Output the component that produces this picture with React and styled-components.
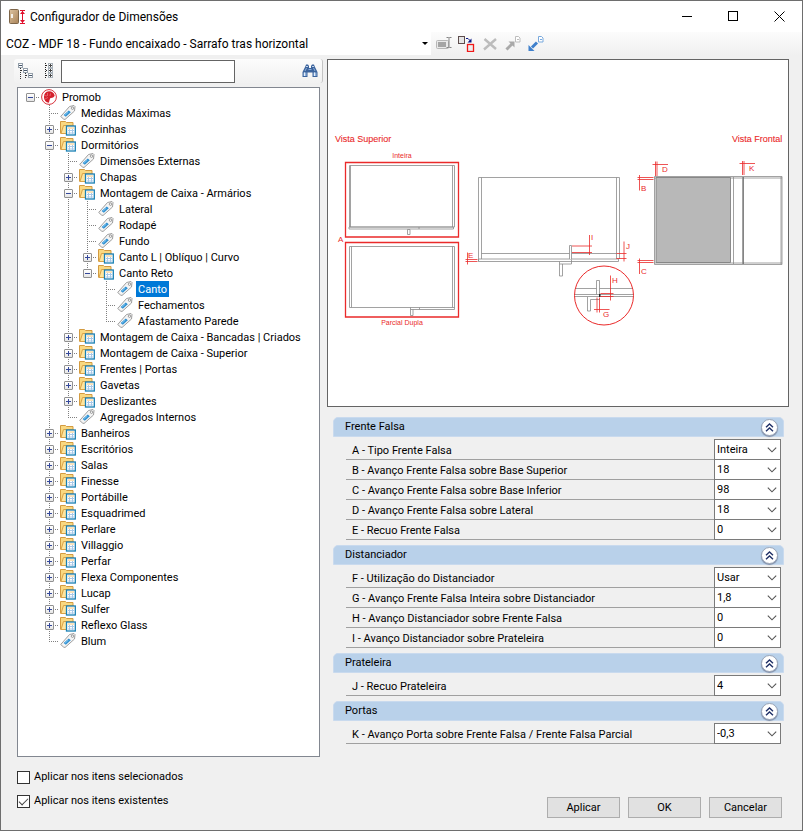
import React from 'react'
import styled, { createGlobalStyle, css } from 'styled-components'

const TREE = {
  name: 'Promob',
  icon: 'brand',
  children: [
    { name: 'Medidas Máximas', icon: 'tag' },
    { name: 'Cozinhas' },
    {
      name: 'Dormitórios',
      children: [
        { name: 'Dimensões Externas', icon: 'tag' },
        { name: 'Chapas' },
        {
          name: 'Montagem de Caixa - Armários',
          children: [
            { name: 'Lateral', icon: 'tag' },
            { name: 'Rodapé', icon: 'tag' },
            { name: 'Fundo', icon: 'tag' },
            { name: 'Canto L | Oblíquo | Curvo' },
            {
              name: 'Canto Reto',
              children: [
                { name: 'Canto', icon: 'tag' },
                { name: 'Fechamentos', icon: 'tag' },
                { name: 'Afastamento Parede', icon: 'tag' },
              ],
            },
          ],
        },
        { name: 'Montagem de Caixa - Bancadas | Criados' },
        { name: 'Montagem de Caixa - Superior' },
        { name: 'Frentes | Portas' },
        { name: 'Gavetas' },
        { name: 'Deslizantes' },
        { name: 'Agregados Internos', icon: 'tag' },
      ],
    },
    { name: 'Banheiros' },
    { name: 'Escritórios' },
    { name: 'Salas' },
    { name: 'Finesse' },
    { name: 'Portábille' },
    { name: 'Esquadrimed' },
    { name: 'Perlare' },
    { name: 'Villaggio' },
    { name: 'Perfar' },
    { name: 'Flexa Componentes' },
    { name: 'Lucap' },
    { name: 'Sulfer' },
    { name: 'Reflexo Glass' },
    { name: 'Blum', icon: 'tag' },
  ],
}

const SECTIONS = [
  {
    title: 'Frente Falsa',
    fields: [
      ['A - Tipo Frente Falsa', 'Inteira'],
      ['B - Avanço Frente Falsa sobre Base Superior', '18'],
      ['C - Avanço Frente Falsa sobre Base Inferior', '98'],
      ['D - Avanço Frente Falsa sobre Lateral', '18'],
      ['E - Recuo Frente Falsa', '0'],
    ],
  },
  {
    title: 'Distanciador',
    fields: [
      ['F - Utilização do Distanciador', 'Usar'],
      ['G - Avanço Frente Falsa Inteira sobre Distanciador', '1,8'],
      ['H - Avanço Distanciador sobre Frente Falsa', '0'],
      ['I - Avanço Distanciador sobre Prateleira', '0'],
    ],
  },
  { title: 'Prateleira', fields: [['J - Recuo Prateleira', '4']] },
  {
    title: 'Portas',
    fields: [['K - Avanço Porta sobre Frente Falsa / Frente Falsa Parcial', '-0,3']],
  },
]

const PROFILE = 'COZ - MDF 18 - Fundo encaixado - Sarrafo tras horizontal'

/* icons */

const AppIcon = () => (
  <svg width="17" height="16" viewBox="0 0 17 16" aria-hidden="true">
    <defs>
      <linearGradient id="door" x1="0" y1="0" x2="1" y2="1">
        <stop offset="0" stopColor="#dcc3a0" />
        <stop offset="1" stopColor="#a98358" />
      </linearGradient>
    </defs>
    <rect x=".5" y=".5" width="9" height="14" rx="1" fill="url(#door)" stroke="#7d6548" />
    <rect x="2" y="5" width="2" height="4" fill="#f4f1ea" />
    <path d="M11 1.500h5M11 14.500h5M13.500 2v12" stroke="#e0102c" />
    <path d="M13.500 2l2.500 3h-5zM13.500 14l2.500-3h-5z" fill="#e0102c" />
  </svg>
)

const BrandIcon = () => (
  <svg width="16" height="16" viewBox="0 0 16 16" aria-hidden="true">
    <circle cx="8" cy="8" r="7.4" fill="#fff" stroke="#d8323c" />
    <path
      d="M8 2.200a5.800 5.800 0 0 1 5.700 4.600c-1 1.700-2.500 2.400-4.200 2.200-1 1-1 2.800-1.500 4.700A5.800 5.800 0 0 1 8 2.200z"
      fill="#d41f2c"
    />
    <path d="M3.500 6.500l2.500.5M6.500 4v3M9.500 4.500L9 7M4 10l3-1.500" stroke="#ee8d93" strokeWidth=".6" />
  </svg>
)

const FolderIcon = () => (
  <svg width="16" height="16" viewBox="0 0 16 16" aria-hidden="true">
    <path d="M.5 12.500V.5h5l1 1H13v4" fill="#f9d880" stroke="#d39b41" />
    <path d="M1 12.500l2.500-8h10v8z" fill="#ffe59d" stroke="#d9a348" />
    <rect x="6.500" y="5" width="8.800" height="9" fill="#fff" stroke="#1a80b4" strokeWidth="1.300" />
    <path d="M8 7h6" stroke="#f6c678" />
    <path d="M8 9.500h6M8 12h6M9.500 8v5M12.500 8v5" stroke="#a9c9e8" />
  </svg>
)

const TagIcon = () => (
  <svg width="16" height="16" viewBox="0 0 16 16" aria-hidden="true">
    <path
      d="M9.500 1.500L14 .5l1 1-.5 4.500-9.500 8.500-1.500-.5-2.800-2.500z"
      fill="#f4f4f4"
      stroke="#949494"
      strokeWidth=".9"
    />
    <circle cx="12.500" cy="3.200" r="1.200" fill="#fff" stroke="#808080" strokeWidth=".8" />
    <path d="M8.800 5.500l2 1.800-5 4.500-2.200-1.700z" fill="#2d8fd0" />
    <path d="M7.800 6.800l.8.7-3.400 3.100-.9-.7z" fill="#6fbaea" />
  </svg>
)

const ICONS = { brand: BrandIcon, tag: TagIcon, folder: FolderIcon }

const CollapseTreeIcon = () => (
  <svg width="16" height="16" viewBox="0 0 16 16" shapeRendering="crispEdges" aria-hidden="true">
    <path d="M2.500 5v11M7.500 10v6" stroke="#333" strokeDasharray="1 1" />
    <path d="M3 7.500h3M8 12.500h3" stroke="#333" strokeDasharray="1 1" />
    <g fill="#fff" stroke="#95a0ab">
      <rect x=".5" y=".5" width="4" height="4" />
      <rect x="5.500" y="5.500" width="4" height="4" />
      <rect x="10.500" y="10.500" width="4" height="4" />
    </g>
    <path d="M1 2.500h3M6 7.500h3M11 12.500h3" stroke="#46566a" />
  </svg>
)

const ExpandTreeIcon = () => (
  <svg width="10" height="16" viewBox="0 0 10 16" shapeRendering="crispEdges" aria-hidden="true">
    <path d="M1.500 0v16" stroke="#222" strokeDasharray="1 1" />
    <path d="M2 2.500h2M2 7.500h2M2 12.500h2" stroke="#222" strokeDasharray="1 1" />
    <g fill="#fff" stroke="#a9b2ba">
      <rect x="4.500" y=".5" width="4" height="4" />
      <rect x="4.500" y="5.500" width="4" height="4" />
      <rect x="4.500" y="10.500" width="4" height="4" />
    </g>
    <path d="M5 2.500h3M5 7.500h3M5 12.500h3M6.500 1v3M6.500 6v3M6.500 11v3" stroke="#444" />
  </svg>
)

const BinocularsIcon = () => (
  <svg width="16" height="16" viewBox="0 0 16 16" aria-hidden="true">
    <path
      d="M3.500 3l.5-1.500h2L7 3v2h2V3l1-1.500h2l.5 1.500 3 6v5h-5v-4.500h-5V14h-5V9z"
      fill="#3c649d"
    />
    <path d="M4 3.500h2M10 3.500h2" stroke="#c3d5ec" />
    <path d="M1.500 9.500h3v3.500h-3zM11.500 9.500h3v3.500h-3z" fill="#8fb1dc" />
    <path d="M2.500 9.500v3.500M12.500 9.500v3.500" stroke="#e4eefa" />
    <path d="M4.500 5l-1.500 3M11.500 5l1.500 3M6.500 6.500h3" stroke="#8aacd8" />
  </svg>
)

const RenameIcon = () => (
  <svg width="16" height="16" viewBox="0 0 16 16" aria-hidden="true">
    <rect x=".5" y="4.500" width="12" height="8" rx="1" fill="#e9e9e9" stroke="#b7b7b7" />
    <rect x="2" y="6" width="8" height="5" fill="#a5a5a5" />
    <path d="M10.500 1.500h2l.5.5.5-.5h2M13 2v9M10.500 11.500h2l.5-.5.5.5h2" fill="none" stroke="#858585" />
  </svg>
)

const ReplaceIcon = () => (
  <svg width="17" height="16" viewBox="0 0 17 16" aria-hidden="true">
    <rect x=".5" y=".5" width="6" height="7" fill="#e6e6e6" stroke="#5d4c4c" />
    <path d="M8 2.500h2l2.500 2.500" fill="none" stroke="#0b1785" />
    <path d="M13.500 2.500v4h-4z" fill="#0b1785" />
    <rect x="9.500" y="8.500" width="6" height="7" fill="#eee" stroke="#f01818" strokeWidth="1.300" />
  </svg>
)

const DeleteIcon = () => (
  <svg width="14" height="14" viewBox="0 0 14 14" aria-hidden="true">
    <path d="M1.500 2l11.500 10M13 2L1 12.500" stroke="#bcbcbc" strokeWidth="2.400" />
  </svg>
)

const TransferIcon = ({ color, page, out }) => (
  <svg width="16" height="16" viewBox="0 0 16 16" aria-hidden="true">
    <path d="M10.500.5h3l1.500 1.500v4h-4.500z" fill="#fff" stroke={page} />
    <path d="M12 3.500h2" stroke={page} />
    <path d={out ? 'M.5 15V9L6.500 15z' : 'M9.500 5.500v6l-6-6z'} fill={color} />
    <path d={out ? 'M9 6.500L4 11.500' : 'M7.500 7.500L1.500 13.500'} stroke={color} strokeWidth="3" />
  </svg>
)

const ChevronIcon = () => (
  <svg width="10" height="6" viewBox="0 0 10 6" aria-hidden="true">
    <path d="M.8.6L5 4.800 9.200.6" fill="none" stroke="#555" strokeWidth="1.100" />
  </svg>
)

const DoubleUpIcon = () => (
  <svg width="9" height="9" viewBox="0 0 9 9" aria-hidden="true">
    <path d="M1 4.200L4.500 1 8 4.200M1 8.200L4.500 5 8 8.200" fill="none" stroke="#1f2f66" strokeWidth="1.400" />
  </svg>
)

const Diagram = () => (
  <Drawing viewBox="0 0 460 346" role="img" aria-label="Vista superior e frontal">
    <g fill="none" stroke="#8a8a8a" strokeWidth=".8">
      <path d="M21.500 105.500h105v61.500h-105zM22.500 105.500V167M124.500 105.500V167M21 167h104.500v2H21z" />
      <path d="M79.500 169.500h2.500v5h-2.500zM91 167v2" />
      <path d="M21.500 186.500h105v63H82.500M21.500 186.500v61h105M23.500 186.500v61M124.500 186.500v61" />
      <path d="M82.500 247.500v8h2.500v-6M91.500 247.500v2" />
      <path d="M150.500 201.500v-84h141v81.500M153.500 117.500V199M288.500 117.500V199M153.500 193.500h135" />
      <path d="M150.500 199h140v2.500h-140zM231.500 201.500v14.500h3V204M231.500 204h12v-4.500" />
      <path d="M241.500 199v-13.500h2V199" fill="#fff" />
      <path d="M247 228.500h21.500M271.500 228.500h33M246.500 234.500h59M246.500 236.500h59" />
      <path d="M268.500 234.500v-14h3v14M259.500 237v14h3v-11.500h9" />
      <path d="M326.500 116.500h127.500v88h-127.500zM326.500 118h127.500M326.500 203h127.500M405.500 117v87M414.500 117v87M453 117v87" />
      <path d="M328 117.500h74.500v85H328z" fill="#b8b8b8" stroke="#777" />
      <path d="M415.500 117v87" stroke="#666" />
    </g>
    <path d="M271 234h1.500v3H271z" fill="#222" />
    <g fill="none" stroke="#ea2a2a">
      <path d="M17.500 102.500h113v74.500h-113zM17.500 182.500h113v74.500h-113z" strokeWidth="1.300" />
      <circle cx="276" cy="235.500" r="29.500" />
      <g strokeWidth=".8">
        <path d="M139.500 192.500v12M137.500 199.500h12M137.500 201.500h12" />
        <path d="M261.500 175v20M244 186h20M244 192.500h20" />
        <path d="M296 181.500v20M288.500 193.500h10M288.500 198.500h10" />
        <path d="M282.500 215.500v25M272.500 233.500h13M272.500 236.500h13" />
        <path d="M269 237.500v15M271.500 237.500v15M266 249.500h15.500" />
        <path d="M327.500 101.500V116M329 101.500V116M324.500 104.500H340" />
        <path d="M414.500 101v14M416 101v14M411.500 103.500H427" />
        <path d="M311.500 115v15.500M309.500 117.500h16M309.500 119.500h16" />
        <path d="M311.500 198.500V214M309.500 200.500h16M309.500 202.500h16" />
      </g>
    </g>
    <g fill="#ea2a2a" fontFamily="Liberation Sans, Arial, sans-serif" fontSize="8">
      <g fontSize="9" stroke="#ea2a2a" strokeWidth=".1">
        <text x="7" y="82">Vista Superior</text>
        <text x="404" y="82">Vista Frontal</text>
      </g>
      <g fontSize="7" textAnchor="middle">
        <text x="74" y="98">Inteira</text>
        <text x="74" y="265">Parcial Dupla</text>
      </g>
      <text x="10" y="182">A</text>
      <text x="313" y="131">B</text>
      <text x="313" y="214">C</text>
      <text x="334" y="112">D</text>
      <text x="140" y="198">E</text>
      <text x="275" y="257">G</text>
      <text x="284" y="223">H</text>
      <text x="263" y="180">I</text>
      <text x="298" y="189">J</text>
      <text x="421" y="111">K</text>
    </g>
  </Drawing>
)

/* tree */

const hasToggle = node => node.icon !== 'tag'

class TreeNode extends React.Component {
  state = { open: Boolean(this.props.node.children) }

  handleToggle = () => {
    this.setState(({ open }) => ({ open: !open }))
  }

  render() {
    const { node, guides, root, last, selected, onSelect } = this.props
    const { open } = this.state
    const Icon = ICONS[node.icon || 'folder']
    const children = node.children || []
    return (
      <li>
        <TreeRow>
          {guides.map((line, i) => (
            <Guide key={i} $full={line} />
          ))}
          <Guide $branch $full={!root && !last} $half={!root && last}>
            {hasToggle(node) && (
              <Toggle
                type="button"
                aria-label={`${open ? 'Recolher' : 'Expandir'} ${node.name}`}
                onClick={this.handleToggle}
              >
                <svg width="7" height="7" shapeRendering="crispEdges" aria-hidden="true">
                  <path d={open ? 'M1 3.500h5' : 'M1 3.500h5M3.500 1v5'} stroke="#34489a" />
                </svg>
              </Toggle>
            )}
          </Guide>
          <NodeIcon>
            <Icon />
          </NodeIcon>
          <NodeLabel
            type="button"
            $selected={selected === node.name}
            onClick={() => onSelect(node.name)}
          >
            {node.name}
          </NodeLabel>
        </TreeRow>
        {open && children.length > 0 && (
          <TreeList>
            {children.map((child, i) => (
              <TreeNode
                key={child.name}
                node={child}
                guides={[...guides, !root && !last]}
                last={i === children.length - 1}
                selected={selected}
                onSelect={onSelect}
              />
            ))}
          </TreeList>
        )}
      </li>
    )
  }
}

/* properties */

class Section extends React.Component {
  state = { open: true }

  handleToggle = () => {
    this.setState(({ open }) => ({ open: !open }))
  }

  render() {
    const { title, fields } = this.props
    return (
      <section>
        <SectionHeader>
          <SectionTitle>{title}</SectionTitle>
          <RoundButton
            type="button"
            aria-label={`Recolher ${title}`}
            onClick={this.handleToggle}
          >
            <DoubleUpIcon />
          </RoundButton>
        </SectionHeader>
        {this.state.open && (
          <Fields>
            {fields.map(([label, value]) => {
              const id = `field-${label[0]}`
              return (
                <Field key={id}>
                  <FieldLabel htmlFor={id}>{label}</FieldLabel>
                  <SelectBox>
                    <FieldSelect id={id} defaultValue={value}>
                      <option>{value}</option>
                    </FieldSelect>
                    <ChevronIcon />
                  </SelectBox>
                </Field>
              )
            })}
          </Fields>
        )}
      </section>
    )
  }
}

class App extends React.Component {
  state = { selected: 'Canto' }

  handleSelect = selected => {
    this.setState({ selected })
  }

  render() {
    return (
      <Window>
        <GlobalStyle />
        <TitleBar>
          <AppIcon />
          <Title>Configurador de Dimensões</Title>
          <WindowButton type="button" aria-label="Minimizar">
            <svg width="11" height="11"><path d="M0 5.500h10" stroke="#000" /></svg>
          </WindowButton>
          <WindowButton type="button" aria-label="Maximizar">
            <svg width="11" height="11">
              <rect x=".5" y=".5" width="9" height="9" fill="none" stroke="#000" />
            </svg>
          </WindowButton>
          <WindowButton type="button" aria-label="Fechar">
            <svg width="11" height="11">
              <path d="M.5.5l10 10M10.500.5l-10 10" stroke="#000" />
            </svg>
          </WindowButton>
        </TitleBar>

        <MainToolbar>
          <ProfileBox>
            <ProfileSelect aria-label="Configuração" defaultValue={PROFILE}>
              <option>{PROFILE}</option>
            </ProfileSelect>
            <svg width="6" height="3" aria-hidden="true">
              <path d="M0 0h6L3 3z" fill="#000" />
            </svg>
          </ProfileBox>
          <ToolButtons>
            <ToolButton type="button" aria-label="Renomear"><RenameIcon /></ToolButton>
            <ToolButton type="button" aria-label="Substituir"><ReplaceIcon /></ToolButton>
            <ToolButton type="button" aria-label="Excluir"><DeleteIcon /></ToolButton>
            <ToolButton type="button" aria-label="Exportar">
              <TransferIcon color="#a9a9a9" page="#bdbdbd" />
            </ToolButton>
            <ToolButton type="button" aria-label="Importar">
              <TransferIcon color="#3f80cc" page="#79a9dd" out />
            </ToolButton>
          </ToolButtons>
        </MainToolbar>

        <Content>
          <Column>
            <SearchBar>
              <ToolButton type="button" aria-label="Recolher tudo"><CollapseTreeIcon /></ToolButton>
              <ToolButton type="button" aria-label="Expandir tudo"><ExpandTreeIcon /></ToolButton>
              <SearchInput type="text" aria-label="Pesquisar" />
              <FindButton type="button" aria-label="Localizar"><BinocularsIcon /></FindButton>
            </SearchBar>
            <TreePanel>
              <TreeList>
                <TreeNode
                  root
                  node={TREE}
                  guides={[]}
                  selected={this.state.selected}
                  onSelect={this.handleSelect}
                />
              </TreeList>
            </TreePanel>
          </Column>
          <Column>
            <DrawingPanel>
              <Diagram />
            </DrawingPanel>
            <Sections>
              {SECTIONS.map(section => (
                <Section key={section.title} {...section} />
              ))}
            </Sections>
          </Column>
        </Content>

        <Footer>
          <Options>
            <Option>
              <Checkbox type="checkbox" />
              Aplicar nos itens selecionados
            </Option>
            <Option>
              <Checkbox type="checkbox" defaultChecked />
              Aplicar nos itens existentes
            </Option>
          </Options>
          <Actions>
            <ActionButton type="button">Aplicar</ActionButton>
            <ActionButton type="button">OK</ActionButton>
            <ActionButton type="button">Cancelar</ActionButton>
          </Actions>
        </Footer>
      </Window>
    )
  }
}

const GlobalStyle = createGlobalStyle`
  *, *::before, *::after {
    box-sizing: border-box;
  }
  body {
    margin: 0;
    font: 11px/16px Roboto, 'Liberation Sans', sans-serif;
    color: #000;
  }
  button, input, select {
    margin: 0;
    font: inherit;
    color: inherit;
  }
  svg {
    display: block;
    flex-shrink: 0;
  }
`

const Window = styled.div`
  display: flex;
  flex-direction: column;
  min-height: 100vh;
  border: 1px solid #6e6e6e;
  background: #f0f0f0;
`

const plainButton = css`
  display: flex;
  align-items: center;
  justify-content: center;
  padding: 0;
  border: 0;
  background: none;
`

const TitleBar = styled.header`
  display: flex;
  align-items: center;
  height: 31px;
  padding-left: 8px;
  background: #fff;
`

const Title = styled.h1`
  flex: 1;
  margin: 0;
  padding-left: 4px;
  font: 12px/16px Roboto, 'Liberation Sans', sans-serif;
`

const WindowButton = styled.button`
  ${plainButton};
  width: 46px;
  height: 30px;
`

const MainToolbar = styled.div`
  display: flex;
  height: 23px;
  background: linear-gradient(#fcfcfc, #f0f0f0);
`

const ProfileBox = styled.div`
  display: grid;
  flex: 0 1 430px;
  align-items: center;
  background: #fff;
  & > * {
    grid-area: 1 / 1;
  }
  & > svg {
    justify-self: end;
    margin-right: 3px;
    pointer-events: none;
  }
`

const ProfileSelect = styled.select`
  width: 100%;
  height: 23px;
  padding: 0 12px 0 5px;
  border: 0;
  background: #fff;
  font: 12px/16px Roboto, 'Liberation Sans', sans-serif;
  appearance: none;
`

const ToolButtons = styled.div`
  display: flex;
  align-items: center;
  padding-left: 1px;
`

const ToolButton = styled.button`
  ${plainButton};
  width: 23px;
  height: 22px;
`

const Content = styled.main`
  display: grid;
  flex: 1;
  grid-template-columns: minmax(0, 309fr) minmax(0, 462fr);
  gap: 4px;
  padding: 4px 13px 0;
`

const Column = styled.div`
  display: flex;
  flex-direction: column;
`

const SearchBar = styled.div`
  display: flex;
  align-items: center;
  height: 24px;
  margin-bottom: 4px;
  border-right: 1px solid #c4c4c4;
  border-radius: 3px;
  background: linear-gradient(#fcfcfc, #f1f1f1);
`

const SearchInput = styled.input`
  flex: 0 1 174px;
  min-width: 0;
  height: 23px;
  margin-left: 1px;
  padding: 0 4px;
  border: 1px solid #646464;
  background: #fff;
`

const FindButton = styled(ToolButton)`
  margin-left: auto;
  margin-right: 1px;
`

const TreePanel = styled.nav`
  flex: 1;
  margin: 0 3px;
  padding: 1px 3px;
  border: 1px solid #828790;
  background: #fff;
`

const TreeList = styled.ul`
  margin: 0;
  padding: 0;
  list-style: none;
`

const TreeRow = styled.div`
  display: flex;
  height: 16px;
`

const VERTICAL = 'repeating-linear-gradient(#808080 0 1px, transparent 1px 2px) 9px 0'
const HORIZONTAL =
  'repeating-linear-gradient(90deg, #808080 0 1px, transparent 1px 2px) 9px 8px / 100% 1px no-repeat'

const Guide = styled.span`
  display: flex;
  align-items: flex-start;
  justify-content: center;
  flex-shrink: 0;
  width: 19px;
  padding-top: 4px;
  background: ${({ $branch, $full, $half }) =>
    [
      $full && `${VERTICAL} / 1px 100% no-repeat`,
      $half && `${VERTICAL} / 1px 8px no-repeat`,
      $branch && HORIZONTAL,
    ]
      .filter(Boolean)
      .join(', ') || 'none'};
`

const Toggle = styled.button`
  ${plainButton};
  width: 9px;
  height: 9px;
  border: 1px solid #919191;
  border-radius: 1px;
  background: linear-gradient(#fff, #e6e6e6);
`

const NodeIcon = styled.span`
  width: 16px;
  margin: 0 3px 0 1px;
`

const NodeLabel = styled.button`
  height: 16px;
  padding: 2px 2px 0;
  border: 0;
  background: ${({ $selected }) => ($selected ? '#0078d7' : 'none')};
  color: ${({ $selected }) => ($selected ? '#fff' : '#000')};
  line-height: 14px;
  white-space: nowrap;
`

const DrawingPanel = styled.figure`
  margin: 0;
  border: 1px solid #646464;
  background: #fff;
`

const Drawing = styled.svg`
  width: 100%;
  height: auto;
`

const Sections = styled.div`
  display: flex;
  flex-direction: column;
  gap: 5px;
  padding: 10px 5px 0 6px;
`

const SectionHeader = styled.header`
  display: flex;
  align-items: center;
  justify-content: space-between;
  height: 20px;
  padding: 0 5px 0 11px;
  border: 1px solid #c9daee;
  border-radius: 5px 5px 0 0;
  background: #b9d1ea;
`

const SectionTitle = styled.h2`
  margin: 0;
  font: inherit;
`

const RoundButton = styled.button`
  ${plainButton};
  width: 17px;
  height: 17px;
  border: 1px solid #9aa5b8;
  border-radius: 50%;
  background: #fff;
  box-shadow: 0 1px 1px #7d8ba5;
`

const Fields = styled.div`
  padding: 2px 3px 0 13px;
`

const Field = styled.div`
  display: flex;
  height: 21px;
  &:not(:first-child) {
    margin-top: -1px;
  }
`

const FieldLabel = styled.label`
  flex: 1;
  padding: 4px 0 0 6px;
  border-bottom: 1px solid #a0a0a0;
`

const SelectBox = styled.div`
  display: grid;
  width: 67px;
  align-items: center;
  & > * {
    grid-area: 1 / 1;
  }
  & > svg {
    justify-self: end;
    margin-right: 4px;
    pointer-events: none;
  }
`

const FieldSelect = styled.select`
  width: 100%;
  height: 21px;
  padding: 0 14px 0 2px;
  border: 1px solid #7a7a7a;
  border-radius: 0;
  background: #fff;
  appearance: none;
`

const Footer = styled.footer`
  display: flex;
  align-items: flex-end;
  justify-content: space-between;
  padding: 12px 20px 12px 16px;
`

const Options = styled.div`
  display: flex;
  flex-direction: column;
  gap: 8px;
  padding-bottom: 9px;
`

const Option = styled.label`
  display: flex;
  align-items: center;
  gap: 4px;
`

const Checkbox = styled.input`
  display: grid;
  place-items: center;
  width: 13px;
  height: 13px;
  border: 1px solid #333;
  background: #fff;
  appearance: none;
  &:checked::before {
    content: '';
    width: 9px;
    height: 5px;
    margin-top: -2px;
    border: solid #444;
    border-width: 0 0 1px 1px;
    transform: rotate(-45deg);
  }
`

const Actions = styled.div`
  display: flex;
  gap: 8px;
`

const ActionButton = styled.button`
  width: 73px;
  height: 21px;
  padding: 0;
  border: 1px solid #adadad;
  background: #e1e1e1;
`

export default App
